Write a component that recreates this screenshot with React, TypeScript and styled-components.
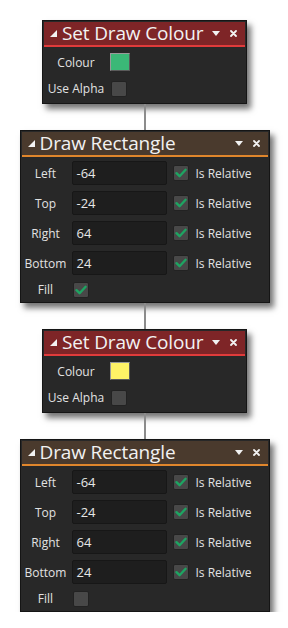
import React from "react";
import styled, { createGlobalStyle } from "styled-components";

const Global = createGlobalStyle`
  html, body { margin: 0; padding: 0; background: #ffffff; }
  body { font-family: "Open Sans", "Noto Sans", sans-serif; }
`;

const Page = styled.div`
  width: 288px;
  display: flex;
  flex-direction: column;
  align-items: center;
  padding-top: 20px;
  padding-left: 1px;
  box-sizing: border-box;
`;

const Node = styled.div<{ $width: number }>`
  width: ${(p) => p.$width}px;
  box-sizing: border-box;
  background: #282828;
  border: 1px solid #151515;
  padding: 1px;
  box-shadow: 4px 5px 6px rgba(0, 0, 0, 0.55);
`;

const Header = styled.div<{ $bg: string; $line: string }>`
  height: 23px;
  background: ${(p) => p.$bg};
  border-bottom: 2px solid ${(p) => p.$line};
  display: flex;
  align-items: center;
  padding: 0 8px 0 6px;
  gap: 5px;
  color: #f2f2f2;
`;

const Title = styled.div`
  flex: 1;
  font-size: 19px;
  line-height: 23px;
  white-space: nowrap;
  letter-spacing: -0.15px;
`;

const HeaderIcons = styled.div`
  display: flex;
  align-items: center;
  gap: 10px;
`;

const Connector = styled.div`
  width: 2px;
  height: 26px;
  background: #8c8c8c;
`;

const Body = styled.div<{ $cols: string; $pt: number; $pb: number; $rowGap: number }>`
  display: grid;
  grid-template-columns: ${(p) => p.$cols};
  column-gap: 2px;
  row-gap: ${(p) => p.$rowGap}px;
  padding: ${(p) => p.$pt}px 0 ${(p) => p.$pb}px 0;
  align-items: center;
`;

const Label = styled.div`
  font-size: 12px;
  color: #e2e2e2;
  text-align: center;
  white-space: nowrap;
`;

const Input = styled.div`
  width: 95px;
  height: 24px;
  box-sizing: border-box;
  background: #1e1e1e;
  border: 1px solid #171717;
  border-radius: 2px;
  padding-left: 4px;
  font-size: 13px;
  line-height: 22px;
  color: #e6e6e6;
`;

const Relative = styled.div`
  display: flex;
  align-items: center;
  gap: 7px;
  padding-left: 4px;
  font-size: 12px;
  color: #e2e2e2;
  white-space: nowrap;
`;

const Swatch = styled.div<{ $color: string }>`
  width: 20px;
  height: 18px;
  box-sizing: border-box;
  background: ${(p) => p.$color};
  border: 1px solid;
  border-color: #9a9a9a #5a5a5a #5a5a5a #9a9a9a;
`;

const Box = styled.div`
  width: 16px;
  height: 16px;
  box-sizing: border-box;
  background: #484848;
  border: 1px solid #222;
  border-radius: 2px;
  display: flex;
  align-items: center;
  justify-content: center;
`;

const Cell = styled.div<{ $pl?: number }>`
  display: flex;
  align-items: center;
  padding-left: ${(p) => p.$pl ?? 0}px;
`;

const Check: React.FC<{ checked?: boolean }> = ({ checked }) => (
  <Box>
    {checked && (
      <svg width="12" height="10" viewBox="0 0 12 10">
        <path d="M1.5 5.2 L4.6 8.2 L10.6 1.8" fill="none" stroke="#1ea462" strokeWidth="2.4" strokeLinecap="round" strokeLinejoin="round" />
      </svg>
    )}
  </Box>
);

const Collapse = () => (
  <svg width="7" height="7" viewBox="0 0 7 7">
    <path d="M7 0 L7 7 L0 7 Z" fill="#f2f2f2" />
  </svg>
);

const Icons = () => (
  <HeaderIcons>
    <svg width="8" height="5" viewBox="0 0 8 5">
      <path d="M0 0 L8 0 L4 5 Z" fill="#f2f2f2" />
    </svg>
    <svg width="7" height="7" viewBox="0 0 7 7">
      <path d="M1 1 L6 6 M6 1 L1 6" stroke="#f2f2f2" strokeWidth="1.8" strokeLinecap="round" />
    </svg>
  </HeaderIcons>
);

const SetColour: React.FC<{ color: string }> = ({ color }) => (
  <Node $width={205}>
    <Header $bg="#7e2527" $line="#e03b3b">
      <Collapse />
      <Title>Set Draw Colour</Title>
      <Icons />
    </Header>
    <Body $cols="64px auto" $pt={6} $pb={5} $rowGap={9}>
      <Label>Colour</Label>
      <Cell>
        <Swatch $color={color} />
      </Cell>
      <Label>Use Alpha</Label>
      <Cell $pl={1}>
        <Check />
      </Cell>
    </Body>
  </Node>
);

const rows = [
  { label: "Left", value: "-64" },
  { label: "Top", value: "-24" },
  { label: "Right", value: "64" },
  { label: "Bottom", value: "24" },
];

const DrawRect: React.FC<{ fill: boolean }> = ({ fill }) => (
  <Node $width={250}>
    <Header $bg="#4a3a2d" $line="#e0862c">
      <Collapse />
      <Title>Draw Rectangle</Title>
      <Icons />
    </Header>
    <Body $cols="48px 95px auto" $pt={4} $pb={3} $rowGap={6}>
      {rows.map((r) => (
        <React.Fragment key={r.label}>
          <Label>{r.label}</Label>
          <Input>{r.value}</Input>
          <Relative>
            <Check checked />
            Is Relative
          </Relative>
        </React.Fragment>
      ))}
      <Label>Fill</Label>
      <Cell $pl={1}>
        <Check checked={fill} />
      </Cell>
      <div />
    </Body>
  </Node>
);

export default function App() {
  return (
    <>
      <Global />
      <Page>
        <SetColour color="#3bb877" />
        <Connector />
        <DrawRect fill />
        <Connector />
        <SetColour color="#fff266" />
        <Connector />
        <DrawRect fill={false} />
      </Page>
    </>
  );
}
